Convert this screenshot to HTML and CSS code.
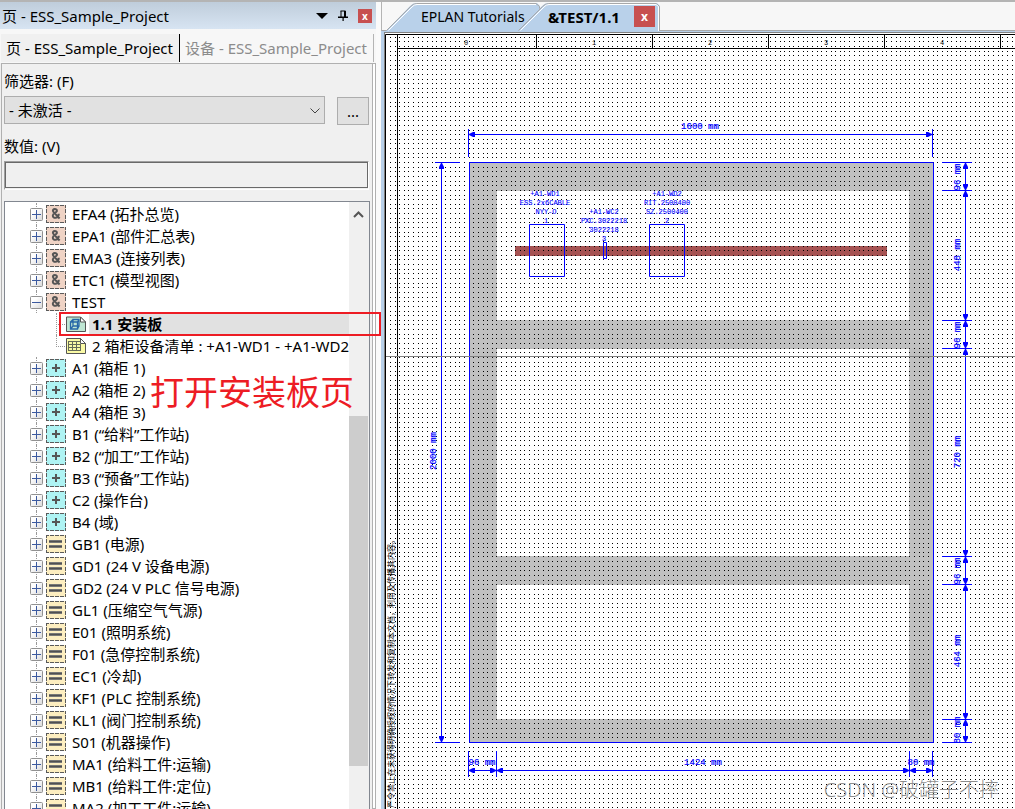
FILE: index.html
```html
<!DOCTYPE html>
<html lang="zh-CN">
<head>
<meta charset="utf-8">
<title>页 - ESS_Sample_Project</title>
<link rel="stylesheet" href="styles.css">
</head>
<body>
<svg class="defs" aria-hidden="true">
  <defs>
    <linearGradient id="boxfill" x1="0" y1="0" x2="1" y2="1"><stop offset="0.3" stop-color="#fff"/><stop offset="1" stop-color="#d8d8d8"/></linearGradient>
    <symbol id="plus" viewBox="0 0 13 13"><rect x="0.5" y="0.5" width="12" height="12" rx="1" fill="url(#boxfill)" stroke="#919191"/><path d="M2 6.5h9M6.5 2v9" stroke="#3c5aa0" fill="none"/></symbol>
    <symbol id="minus" viewBox="0 0 13 13"><rect x="0.5" y="0.5" width="12" height="12" rx="1" fill="url(#boxfill)" stroke="#919191"/><path d="M2 6.5h9" stroke="#3c5aa0" fill="none"/></symbol>
    <symbol id="frame" viewBox="0 0 20 18"><path d="M0 0.5h20M0 17.5h20" stroke="#5a5a5a" stroke-dasharray="3 1 4 1 4 1 4 1" fill="none"/><path d="M0.5 0v18M19.5 0v18" stroke="#5a5a5a" stroke-dasharray="3 1 4 2 4 1" fill="none"/></symbol>
    <symbol id="amp" viewBox="0 0 20 18"><rect width="20" height="18" fill="#efd3c5"/><use href="#frame"/><path d="M13.6 13.5L7.6 7.1C6 5.2 7.4 4 9 4s2.8 1.8 1.200 3C8.800 8.100 6.800 8.600 6.800 10.700c0 3.400 5.800 2.800 6-2" fill="none" stroke="#555" stroke-width="2"/></symbol>
    <symbol id="loc" viewBox="0 0 20 18"><rect width="20" height="18" fill="#aef3f3"/><use href="#frame"/><path d="M6 9h8M10 5v8" stroke="#555" stroke-width="2" fill="none"/></symbol>
    <symbol id="func" viewBox="0 0 20 18"><rect width="20" height="18" fill="#fdeec0"/><use href="#frame"/><path d="M3 6.500h13M3 11.500h13" stroke="#777" stroke-width="3" fill="none"/><path d="M3 6.500h13M3 11.500h13" stroke="#505050" fill="none"/></symbol>
    <symbol id="panelpage" viewBox="0 0 20 16"><path d="M0.500 1h14l5 5v9.500h-19z" fill="#bfe6d3" stroke="#555"/><path d="M14.500 1v5h5z" fill="#fff" stroke="#555"/><path d="M4.500 6v7h7V6zM7 3.500v6.500h6V3.500zM4.500 6L7 3.500M11.500 6L13 3.500M11.500 13L13 10M4.500 13L7 10" fill="none" stroke="#2768a8" stroke-width="1.300"/></symbol>
    <symbol id="listpage" viewBox="0 0 20 16"><path d="M0.500 0.500h14l5 5v10h-19z" fill="#fafaa6" stroke="#555"/><path d="M14.500 0.500v5h5z" fill="#fff" stroke="#555"/><path d="M2.500 3.500h12M2.500 6.500h12M2.500 9.500h12M2.500 12.500h12M2.500 3v10M6.500 3v10M10.500 3v10M14.500 6v7" fill="none" stroke="#666b58"/></symbol>
  </defs>
</svg>
<div class="app">
  <aside class="panel">
    <header class="titlebar">
      <span class="title">页 - ESS_Sample_Project</span>
      <button class="tool" aria-label="菜单"><svg width="12" height="6"><path d="M0 0h12L6 6z"/></svg></button>
      <button class="tool" aria-label="固定"><svg width="10" height="11"><path d="M2.500 1h5v6M3 1v6" fill="none" stroke="#000"/><path d="M6 1h2v6H6zM0 6.500h10v1.500H0zM4.500 7h1.200v4H4.500z"/></svg></button>
      <button class="close small" aria-label="关闭">x</button>
    </header>
    <nav class="tabs">
      <button class="tab active">页 - ESS_Sample_Project</button>
      <button class="tab">设备 - ESS_Sample_Project</button>
    </nav>
    <section class="body">
      <label class="label" for="filter">筛选器: (F)</label>
      <div class="filter">
        <div class="selectbox">
          <select id="filter"><option>- 未激活 -</option></select>
          <svg class="chevron" width="10" height="6"><path d="M0.500 0.500L5 5l4.500-4.500" fill="none" stroke="#444"/></svg>
        </div>
        <button class="more" aria-label="更多">...</button>
      </div>
      <label class="label" for="value">数值: (V)</label>
      <div class="valuebox"><input id="value" type="text"></div>
      <div class="tree">
        <ul class="rows">
          <li class="row"><button class="exp" aria-label="展开"><svg><use href="#plus"/></svg></button><svg class="ico"><use href="#amp"/></svg><span>EFA4 (拓扑总览)</span></li>
          <li class="row"><button class="exp" aria-label="展开"><svg><use href="#plus"/></svg></button><svg class="ico"><use href="#amp"/></svg><span>EPA1 (部件汇总表)</span></li>
          <li class="row"><button class="exp" aria-label="展开"><svg><use href="#plus"/></svg></button><svg class="ico"><use href="#amp"/></svg><span>EMA3 (连接列表)</span></li>
          <li class="row"><button class="exp" aria-label="展开"><svg><use href="#plus"/></svg></button><svg class="ico"><use href="#amp"/></svg><span>ETC1 (模型视图)</span></li>
          <li class="row"><button class="exp" aria-label="折叠"><svg><use href="#minus"/></svg></button><svg class="ico"><use href="#amp"/></svg><span>TEST</span></li>
          <li class="row child"><svg class="ico page"><use href="#panelpage"/></svg><span class="selected">1.1 安装板</span></li>
          <li class="row child last"><svg class="ico page"><use href="#listpage"/></svg><span>2 箱柜设备清单 : +A1-WD1 - +A1-WD2</span></li>
          <li class="row"><button class="exp" aria-label="展开"><svg><use href="#plus"/></svg></button><svg class="ico"><use href="#loc"/></svg><span>A1 (箱柜 1)</span></li>
          <li class="row"><button class="exp" aria-label="展开"><svg><use href="#plus"/></svg></button><svg class="ico"><use href="#loc"/></svg><span>A2 (箱柜 2)</span></li>
          <li class="row"><button class="exp" aria-label="展开"><svg><use href="#plus"/></svg></button><svg class="ico"><use href="#loc"/></svg><span>A4 (箱柜 3)</span></li>
          <li class="row"><button class="exp" aria-label="展开"><svg><use href="#plus"/></svg></button><svg class="ico"><use href="#loc"/></svg><span>B1 (“给料”工作站)</span></li>
          <li class="row"><button class="exp" aria-label="展开"><svg><use href="#plus"/></svg></button><svg class="ico"><use href="#loc"/></svg><span>B2 (“加工”工作站)</span></li>
          <li class="row"><button class="exp" aria-label="展开"><svg><use href="#plus"/></svg></button><svg class="ico"><use href="#loc"/></svg><span>B3 (“预备”工作站)</span></li>
          <li class="row"><button class="exp" aria-label="展开"><svg><use href="#plus"/></svg></button><svg class="ico"><use href="#loc"/></svg><span>C2 (操作台)</span></li>
          <li class="row"><button class="exp" aria-label="展开"><svg><use href="#plus"/></svg></button><svg class="ico"><use href="#loc"/></svg><span>B4 (域)</span></li>
          <li class="row"><button class="exp" aria-label="展开"><svg><use href="#plus"/></svg></button><svg class="ico"><use href="#func"/></svg><span>GB1 (电源)</span></li>
          <li class="row"><button class="exp" aria-label="展开"><svg><use href="#plus"/></svg></button><svg class="ico"><use href="#func"/></svg><span>GD1 (24 V 设备电源)</span></li>
          <li class="row"><button class="exp" aria-label="展开"><svg><use href="#plus"/></svg></button><svg class="ico"><use href="#func"/></svg><span>GD2 (24 V PLC 信号电源)</span></li>
          <li class="row"><button class="exp" aria-label="展开"><svg><use href="#plus"/></svg></button><svg class="ico"><use href="#func"/></svg><span>GL1 (压缩空气气源)</span></li>
          <li class="row"><button class="exp" aria-label="展开"><svg><use href="#plus"/></svg></button><svg class="ico"><use href="#func"/></svg><span>E01 (照明系统)</span></li>
          <li class="row"><button class="exp" aria-label="展开"><svg><use href="#plus"/></svg></button><svg class="ico"><use href="#func"/></svg><span>F01 (急停控制系统)</span></li>
          <li class="row"><button class="exp" aria-label="展开"><svg><use href="#plus"/></svg></button><svg class="ico"><use href="#func"/></svg><span>EC1 (冷却)</span></li>
          <li class="row"><button class="exp" aria-label="展开"><svg><use href="#plus"/></svg></button><svg class="ico"><use href="#func"/></svg><span>KF1 (PLC 控制系统)</span></li>
          <li class="row"><button class="exp" aria-label="展开"><svg><use href="#plus"/></svg></button><svg class="ico"><use href="#func"/></svg><span>KL1 (阀门控制系统)</span></li>
          <li class="row"><button class="exp" aria-label="展开"><svg><use href="#plus"/></svg></button><svg class="ico"><use href="#func"/></svg><span>S01 (机器操作)</span></li>
          <li class="row"><button class="exp" aria-label="展开"><svg><use href="#plus"/></svg></button><svg class="ico"><use href="#func"/></svg><span>MA1 (给料工件:运输)</span></li>
          <li class="row"><button class="exp" aria-label="展开"><svg><use href="#plus"/></svg></button><svg class="ico"><use href="#func"/></svg><span>MB1 (给料工件:定位)</span></li>
          <li class="row"><button class="exp" aria-label="展开"><svg><use href="#plus"/></svg></button><svg class="ico"><use href="#func"/></svg><span>MA2 (加工工件:运输)</span></li>
        </ul>
        <div class="scroll">
          <button class="up" aria-label="向上"><svg width="11" height="7"><path d="M1 6l4.500-4.500L10 6" fill="none" stroke="#555" stroke-width="2"/></svg></button>
          <div class="thumb"></div>
        </div>
      </div>
    </section>
  </aside>
  <main class="doc">
    <nav class="doctabs">
      <div class="doctab first">
        <svg class="shape" width="154" height="28"><path d="M0 28L24 3q3-3 6-3H151l3 3v25z" fill="#b9d1ea"/><path d="M0.500 27.500L24.500 3.500q3-3 6-3H150l3.500 3V28" fill="none" stroke="#a8a8a8"/><path d="M2.500 27.500L26 4q2-2.500 5-2.500H150" fill="none" stroke="#fff"/></svg>
        <button class="name">EPLAN Tutorials</button>
      </div>
      <div class="doctab current">
        <svg class="shape" width="142" height="28"><path d="M0 28L24 3q3-3 6-3H139l3 3v25z" fill="#b9d1ea"/><path d="M0.500 27.500L24.500 3.500q3-3 6-3H138l3.500 3V28" fill="none" stroke="#a8a8a8"/><path d="M2.500 27.500L26 4q2-2.500 5-2.500H138l2.500 2V28" fill="none" stroke="#fff"/></svg>
        <button class="name">&amp;TEST/1.1</button>
        <button class="close" aria-label="关闭">x</button>
      </div>
    </nav>
    <div class="canvas">
      <svg class="drawing" width="100%" height="100%">
        <defs>
          <path id="dotrow" d="M0 0h1v1h-1zM5 0h1v1h-1zM9 0h1v1h-1zM14 0h1v1h-1zM18 0h1v1h-1zM23 0h1v1h-1zM28 0h1v1h-1zM32 0h1v1h-1zM37 0h1v1h-1zM42 0h1v1h-1zM46 0h1v1h-1zM51 0h1v1h-1zM55 0h1v1h-1zM60 0h1v1h-1zM65 0h1v1h-1zM69 0h1v1h-1zM74 0h1v1h-1zM79 0h1v1h-1zM83 0h1v1h-1zM88 0h1v1h-1zM93 0h1v1h-1zM97 0h1v1h-1zM102 0h1v1h-1zM106 0h1v1h-1zM111 0h1v1h-1z"/>
          <pattern id="dots" patternUnits="userSpaceOnUse" x="390" y="37" width="116" height="116">
            <use href="#dotrow"/><use href="#dotrow" y="4"/><use href="#dotrow" y="9"/><use href="#dotrow" y="14"/><use href="#dotrow" y="18"/><use href="#dotrow" y="23"/><use href="#dotrow" y="28"/><use href="#dotrow" y="32"/><use href="#dotrow" y="37"/><use href="#dotrow" y="42"/><use href="#dotrow" y="46"/><use href="#dotrow" y="51"/><use href="#dotrow" y="55"/><use href="#dotrow" y="60"/><use href="#dotrow" y="65"/><use href="#dotrow" y="69"/><use href="#dotrow" y="74"/><use href="#dotrow" y="79"/><use href="#dotrow" y="83"/><use href="#dotrow" y="88"/><use href="#dotrow" y="93"/><use href="#dotrow" y="97"/><use href="#dotrow" y="102"/><use href="#dotrow" y="106"/><use href="#dotrow" y="111"/>
          </pattern>
          <marker id="arrow" viewBox="0 0 6 5" refX="6" refY="2.500" markerWidth="6" markerHeight="5" markerUnits="userSpaceOnUse" orient="auto-start-reverse"><path d="M0 0h2l4 2v1l-4 2H0z" fill="#00f" stroke="none"/></marker>
        </defs>
        <g transform="translate(-385 -33)">
          <path d="M469 162H933V742H469zM497 191V320H909V191zM497 349V556H909V349zM497 585V719H909V585z" fill="#c0c0c0" fill-rule="evenodd"/>
          <rect x="515" y="246" width="372" height="10" fill="#a55252"/>
          <rect x="386" y="35" width="4000" height="3000" fill="url(#dots)"/>
          <g class="ink">
            <path d="M385.500 4000V34.500H4385M397.500 34V4000M397.500 48.500H4385M536.500 34v14M652.500 34v14M768.500 34v14M884.500 34v14M1000.500 34v14"/>
          </g>
          <g class="colnum"><text x="466" y="45">0</text><text x="594" y="45">1</text><text x="710" y="45">2</text><text x="826" y="45">3</text><text x="942" y="45">4</text></g>
          <g class="blue">
            <path d="M469.500 162.500H933.500V742.500H469.500zM529.500 224.500h35v52h-35zM649.500 224.500h35v52h-35zM603.500 242.500h3v16h-3z"/>
            <path d="M468.500 129v28M932.500 129v28M435 162.500h25M435 742.500h25M468.500 751v26M496.500 751v26M909.500 751v26M932.500 751v26"/>
            <path d="M942 162.500h30M942 190.500h30M942 320.500h30M942 348.500h30M942 556.500h30M942 584.500h30M942 719.500h30M942 742.500h30"/>
            <g class="span">
              <path d="M469 134.500H932"/><path d="M441.500 163V742"/>
              <path d="M469 770.500H496"/><path d="M497 770.500H909"/><path d="M910 770.500H932"/>
              <path d="M965.500 163V190"/><path d="M965.500 191V320"/><path d="M965.500 321V348"/><path d="M965.500 349V556"/><path d="M965.500 557V584"/><path d="M965.500 585V719"/><path d="M965.500 720V742"/>
            </g>
          </g>
          <path d="M386 356.500H4385" stroke="#808080" fill="none"/>
          <g class="dim">
            <text x="700" y="129">1600 mm</text><text x="482" y="765">96 mm</text><text x="703" y="765">1424 mm</text><text x="921" y="765">80 mm</text>
            <text transform="translate(436 451) rotate(-90)">2000 mm</text>
            <text transform="translate(960 177) rotate(-90)">96 mm</text>
            <text transform="translate(960 255) rotate(-90)">448 mm</text>
            <text transform="translate(960 335) rotate(-90)">96 mm</text>
            <text transform="translate(960 452) rotate(-90)">720 mm</text>
            <text transform="translate(960 571) rotate(-90)">96 mm</text>
            <text transform="translate(960 651) rotate(-90)">464 mm</text>
            <text transform="translate(960 730) rotate(-90)">80 mm</text>
          </g>
          <g class="part">
            <text x="545" y="196">+A1-WD1</text><text x="545" y="205">ESS.2x6CABLE</text><text x="546" y="214">NYY-O</text><text x="546" y="223">1</text>
            <text x="604" y="214">+A1-WC2</text><text x="604" y="223">PXC.3022218</text><text x="604" y="232">3022218</text><text x="604" y="241">3</text>
            <text x="667" y="196">+A1-WD2</text><text x="667" y="205">RIT.2500400</text><text x="667" y="214">SZ.2500400</text><text x="667" y="223">2</text>
          </g>
          <text class="notice" transform="translate(394 808) rotate(-90)">严令禁止在未获得明确授权的情况下转发和复制本文档，利用及传播其内容。</text>
        </g>
      </svg>
      <div class="watermark">CSDN @破罐子不摔</div>
    </div>
  </main>
  <div class="mark"></div>
  <div class="callout">打开安装板页</div>
</div>
</body>
</html>
```
FILE: styles.css
```css
* { box-sizing: border-box; }
body { margin: 0; font: 15px/22px "Noto Sans", "Noto Sans CJK SC", sans-serif; color: #000; }
button { font: inherit; color: inherit; border: 0; padding: 0; background: none; }
svg { display: block; }
.defs { position: absolute; width: 0; height: 0; }
.app { position: relative; display: flex; height: 100vh; overflow: hidden; border-top: 2px solid #b4b4b4; background: #fafafa; }

.panel { flex: none; width: 376px; display: flex; flex-direction: column; background: #f0f0f0; }
.titlebar { flex: none; height: 27px; display: flex; align-items: center; gap: 10px; padding: 0 4px 0 2px; background: linear-gradient(#bfcddb, #d7e4f2); }
.title { flex: 1; }
.tool { display: flex; align-items: center; }
.close { flex: none; width: 21px; height: 21px; background: #c75050; color: #fff; font: bold 11px/20px "Noto Sans", sans-serif; }
.close.small { width: 14px; height: 14px; font-size: 10px; line-height: 12px; }

.tabs { flex: none; display: flex; align-items: stretch; height: 34px; padding: 5px 2px 1px 1px; background: #f7f7f7; }
.tab { padding: 0 0 0 5px; border-right: 1px solid #b4b4b4; color: #8c8c8c; white-space: nowrap; flex: 1; text-align: left; }
.tab.active { flex: none; width: 179px; border-right-color: #000; background: #f0f0f0; color: #000; }
.body { flex: 1; min-height: 0; display: flex; flex-direction: column; margin: 0 3px 0 1px; padding: 6px 2px 0; border: 1px solid #b0b0b0; border-bottom: 0; box-shadow: 3px 0 0 -1px #fff, 3px 0 0 #b0b0b0; }
.label { flex: none; padding-bottom: 4px; line-height: 22px; }
.filter { flex: none; display: flex; justify-content: space-between; align-items: flex-end; gap: 12px; height: 29px; margin: 0 1px 10px 0; }
.selectbox { flex: 1; position: relative; align-self: flex-start; }
.selectbox select { display: block; width: 100%; height: 28px; padding: 0 4px; appearance: none; border: 1px solid #adadad; border-radius: 0; background: #e1e1e1; color: #000; font: inherit; }
.chevron { position: absolute; right: 5px; top: 12px; }
.more { width: 32px; height: 28px; border: 1px solid #adadad; background: #e1e1e1; }
.valuebox { flex: none; height: 29px; margin-right: 1px; border: 1px solid #a0a0a0; border-right-color: #fff; border-bottom-color: #fff; }
.valuebox input { display: block; width: 100%; height: 26px; padding: 0 4px; border: 1px solid #696969; background: #f0f0f0; font: inherit; }

.tree { flex: 1; min-height: 0; display: flex; margin-top: 11px; border: 1px solid #828790; border-bottom: 0; background: #fff; }
.rows { flex: 1; min-width: 0; margin: 0; padding: 1px 0 0 25px; list-style: none; overflow: hidden; }
.row { position: relative; display: flex; align-items: center; height: 22px; white-space: nowrap; }
.row::before { content: ""; position: absolute; left: 6px; top: 0; height: 22px; border-left: 1px dotted #999; }
.exp { position: relative; width: 13px; height: 13px; margin-right: 3px; }
.exp svg { width: 13px; height: 13px; }
.ico { flex: none; width: 20px; height: 18px; margin-right: 6px; }
.row.child { padding-left: 36px; }
.row.child::before { left: 26px; }
.row.child.last::before { height: 12px; }
.row.child::after { content: ""; position: absolute; left: 26px; top: 11px; width: 9px; border-top: 1px dotted #999; }
.ico.page { height: 16px; margin-right: 3px; }
.row.child span { padding-left: 3px; }
.selected { flex: 1; background: #e1e1e1; font-weight: bold; }
.scroll { flex: none; width: 20px; display: flex; flex-direction: column; padding-right: 1px; background: #f0f0f0; }
.up { height: 24px; display: flex; align-items: center; justify-content: center; }
.thumb { height: 350px; margin-top: 190px; background: #cdcdcd; }

.doc { flex: 1; min-width: 0; display: flex; flex-direction: column; margin-left: 5px; background: #f7f7f7; }
.doctabs { flex: none; display: flex; align-items: flex-end; height: 29px; padding-left: 4px; border-left: 1px solid #b4b4b4; border-bottom: 1px solid #a8a8a8; }
.doctab { position: relative; display: flex; align-items: center; height: 27px; font-size: 15px; }
.doctab.first { width: 154px; padding-left: 35px; font-size: 14px; }
.doctab.current { width: 140px; margin-left: -22px; padding: 0 3px 0 30px; justify-content: space-between; font-weight: bold; }
.shape { position: absolute; left: 0; top: 0; }
.name, .doctab .close { position: relative; white-space: nowrap; }
.doctab .close { font-size: 12px; }
.canvas { flex: 1; min-height: 0; position: relative; margin: 1px 0 0 3px; border: solid #808080; border-width: 1px 0 0 1px; outline: 3px solid #b9d1ea; background: #fff; clip-path: inset(-1px 0 0 -3px); }
.ink path { stroke: #000; fill: none; }
.blue path { stroke: #00f; fill: none; }
.span path { marker-start: url(#arrow); marker-end: url(#arrow); }
.colnum { font: 7px "Liberation Mono", monospace; text-anchor: middle; }
.dim { font: 9px "Liberation Mono", monospace; fill: #00f; stroke: #00f; stroke-width: 0.2; text-anchor: middle; }
.part { font: 7px "Liberation Mono", monospace; fill: #00f; stroke: #00f; stroke-width: 0.1; text-anchor: middle; }
.notice { font: 8px "Noto Sans CJK SC", sans-serif; }
.watermark { position: absolute; right: 16px; bottom: 7px; font-size: 20px; line-height: 24px; font-weight: 300; color: rgba(110, 110, 110, 0.8); }

.mark { position: absolute; left: 59px; top: 310px; width: 322px; height: 24px; border: 2px solid #ed1c24; }
.callout { position: absolute; left: 150px; top: 368px; font-size: 34px; line-height: 44px; color: #ed1c24; }
```
